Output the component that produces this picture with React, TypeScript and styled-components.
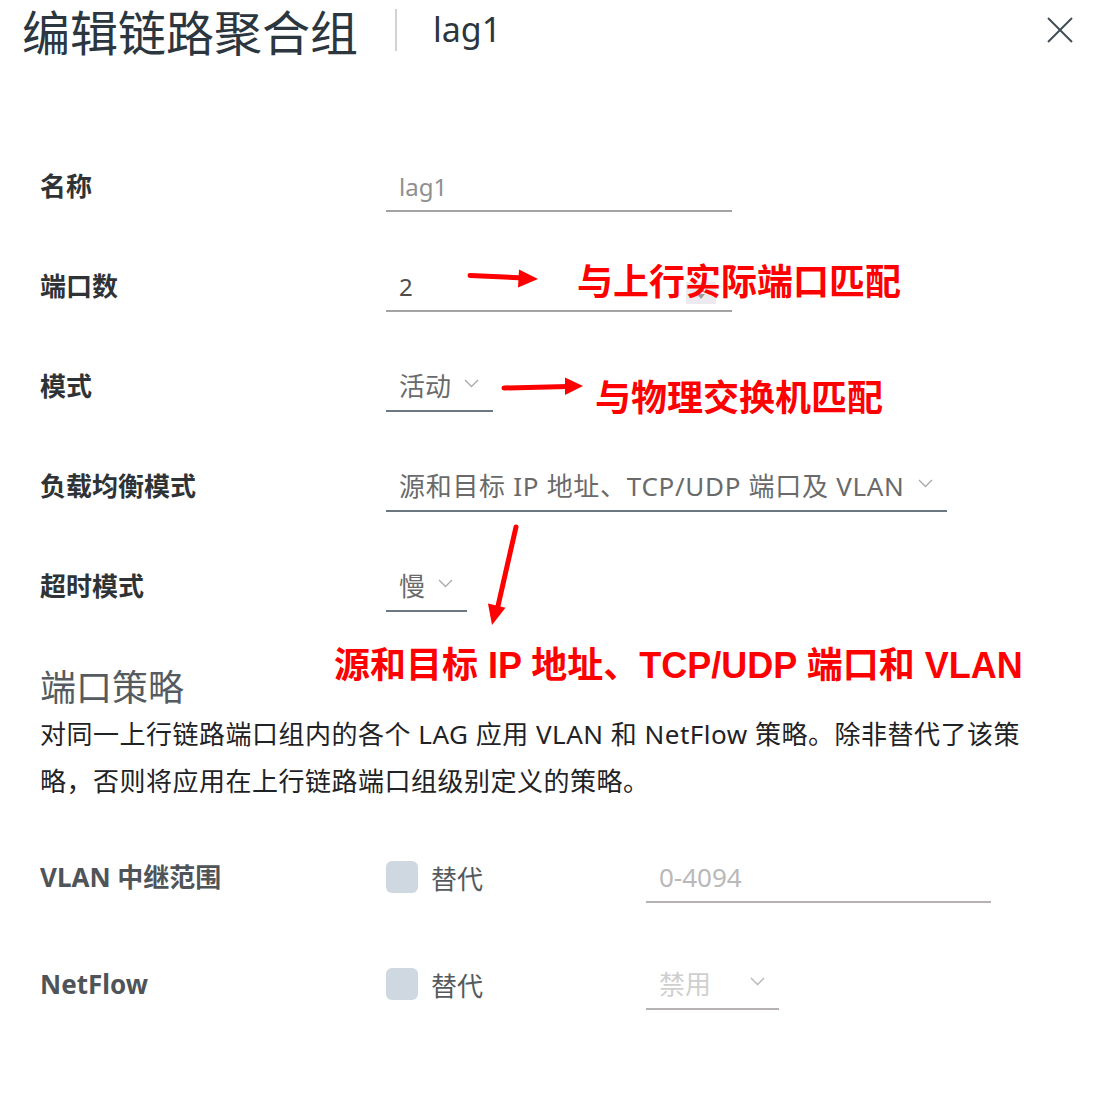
import React from "react";
import styled, { createGlobalStyle } from "styled-components";

const Global = createGlobalStyle`
  html, body { margin: 0; padding: 0; background: #ffffff; }
  body { font-family: "Noto Sans", "Noto Sans CJK SC", sans-serif; }
`;

const Page = styled.div`
  position: relative;
  width: 1108px;
  height: 1104px;
  overflow: hidden;
  background: #ffffff;
`;

const Header = styled.header`
  display: flex;
  align-items: center;
  height: 64px;
  margin-top: -2px;
  padding: 0 35px 0 22px;
`;

const Title = styled.h1`
  margin: 0;
  font-size: 48px;
  line-height: 64px;
  font-weight: 400;
  color: #2b363e;
  font-family: "Noto Sans CJK SC", sans-serif;
  white-space: nowrap;
`;

const Divider = styled.div`
  width: 2px;
  height: 42px;
  background: #d2d2d2;
  margin: 0 36px 0 37px;
`;

const SubTitle = styled.span`
  font-size: 34px;
  line-height: 60px;
  color: #2b363e;
  margin-top: -2px;
`;

const CloseButton = styled.button`
  margin-left: auto;
  border: 0;
  background: transparent;
  padding: 0;
  width: 26px;
  height: 26px;
  display: flex;
  align-items: center;
  justify-content: center;
  cursor: pointer;
`;

const Form = styled.div`
  display: flex;
  flex-direction: column;
  gap: 50px;
  margin-top: 100px;
  padding-left: 40px;
`;

const Row = styled.div`
  display: grid;
  grid-template-columns: 346px auto;
  align-items: start;
  height: 50px;
`;

const Label = styled.div<{ $soft?: boolean }>`
  font-size: 26px;
  line-height: 48px;
  font-weight: 700;
  color: ${(p) => (p.$soft ? "#4f5458" : "#2f3336")};
  font-family: "Noto Sans", "Noto Sans CJK SC", sans-serif;
  white-space: nowrap;
`;

type Tone = "muted" | "plain" | "placeholder" | "disabled";
const toneColor: Record<Tone, string> = {
  muted: "#8f8f8f",
  plain: "#4d4d4d",
  placeholder: "#b9b9b9",
  disabled: "#cfcfcf",
};

const Field = styled.div<{ $width?: number; $line: string; $tone: Tone }>`
  position: relative;
  display: inline-flex;
  align-items: center;
  justify-content: space-between;
  gap: 13px;
  box-sizing: content-box;
  height: 48px;
  width: ${(p) => (p.$width ? `${p.$width - 27}px` : "auto")};
  padding: 0 14px 0 13px;
  border-bottom: 2px solid ${(p) => p.$line};
  font-size: 24px;
  color: ${(p) => toneColor[p.$tone]};
  white-space: nowrap;
  justify-self: start;
`;

const SelectText = styled.span<{ $spread?: boolean }>`
  font-size: 26px;
  line-height: 48px;
  color: inherit;
  letter-spacing: ${(p) => (p.$spread ? "0.7px" : "0")};
`;

const Spinner = styled.div`
  width: 30px;
  height: 22px;
  margin-top: 14px;
  margin-right: 2px;
  background: #ece9ef;
  display: flex;
  align-items: center;
  justify-content: center;
`;

const Chevron = ({ color = "#a9a9a9" }: { color?: string }) => (
  <svg width="15" height="9" viewBox="0 0 15 9" style={{ marginTop: -6 }}>
    <polyline points="1,1 7.5,7.5 14,1" fill="none" stroke={color} strokeWidth="1.3" />
  </svg>
);

const Section = styled.section`
  padding-left: 40px;
  margin-top: 49px;
`;

const SectionTitle = styled.h2`
  margin: 0;
  font-size: 36px;
  line-height: 48px;
  font-weight: 400;
  color: #555b60;
  font-family: "Noto Sans CJK SC", sans-serif;
`;

const Paragraph = styled.p`
  margin: 2px 0 0 0;
  width: 1000px;
  font-size: 26px;
  line-height: 47px;
  letter-spacing: 0.5px;
  color: #1f2326;
`;

const PolicyList = styled.div`
  display: flex;
  flex-direction: column;
  gap: 57px;
  margin-top: 48px;
`;

const PolicyRow = styled.div`
  display: grid;
  grid-template-columns: 346px 260px auto;
  align-items: start;
  height: 50px;
`;

const CheckGroup = styled.label`
  display: flex;
  align-items: center;
  gap: 13px;
  height: 48px;
  font-size: 26px;
  color: #555a5e;
  font-family: "Noto Sans CJK SC", sans-serif;
`;

const CheckBox = styled.span`
  width: 32px;
  height: 32px;
  border-radius: 6px;
  background: #cfd8e0;
`;

const Annotation = styled.div<{ $x: number; $y: number }>`
  position: absolute;
  left: ${(p) => p.$x}px;
  top: ${(p) => p.$y}px;
  font-family: "Liberation Sans", "Noto Sans CJK SC", sans-serif;
  font-weight: 700;
  font-size: 36px;
  line-height: 44px;
  color: #ff0000;
  white-space: nowrap;
`;

const ArrowLayer = styled.svg`
  position: absolute;
  left: 0;
  top: 0;
  pointer-events: none;
`;

export default function App() {
  return (
    <Page>
      <Global />
      <Header>
        <Title>编辑链路聚合组</Title>
        <Divider />
        <SubTitle>lag1</SubTitle>
        <CloseButton aria-label="关闭">
          <svg width="26" height="26" viewBox="0 0 26 26">
            <line x1="1" y1="1" x2="25" y2="25" stroke="#3f4e56" strokeWidth="2" />
            <line x1="25" y1="1" x2="1" y2="25" stroke="#3f4e56" strokeWidth="2" />
          </svg>
        </CloseButton>
      </Header>

      <Form>
        <Row>
          <Label>名称</Label>
          <Field $width={346} $line="#a3a3a3" $tone="muted">
            <span>lag1</span>
          </Field>
        </Row>
        <Row>
          <Label>端口数</Label>
          <Field $width={346} $line="#a3a3a3" $tone="plain">
            <span>2</span>
            <Spinner>
              <svg width="10" height="14" viewBox="0 0 10 14">
                <polygon points="5,1 9,6 1,6" fill="#9b9b9b" />
                <polygon points="1,8 9,8 5,13" fill="#9b9b9b" />
              </svg>
            </Spinner>
          </Field>
        </Row>
        <Row>
          <Label>模式</Label>
          <Field $line="#6b7781" $tone="plain">
            <SelectText style={{ color: "#6a6a6a" }}>活动</SelectText>
            <Chevron />
          </Field>
        </Row>
        <Row>
          <Label>负载均衡模式</Label>
          <Field $line="#6b7781" $tone="plain">
            <SelectText $spread style={{ color: "#6a6a6a" }}>
              源和目标 IP 地址、TCP/UDP 端口及 VLAN
            </SelectText>
            <Chevron />
          </Field>
        </Row>
        <Row>
          <Label>超时模式</Label>
          <Field $line="#6b7781" $tone="plain">
            <SelectText style={{ color: "#6a6a6a" }}>慢</SelectText>
            <Chevron />
          </Field>
        </Row>
      </Form>

      <Section>
        <SectionTitle>端口策略</SectionTitle>
        <Paragraph>
          对同一上行链路端口组内的各个 LAG 应用 VLAN 和 NetFlow 策略。除非替代了该策略，否则将应用在上行链路端口组级别定义的策略。
        </Paragraph>
        <PolicyList>
          <PolicyRow>
            <Label $soft>VLAN 中继范围</Label>
            <CheckGroup>
              <CheckBox />
              替代
            </CheckGroup>
            <Field $width={345} $line="#b7b2b2" $tone="placeholder">
              <SelectText>0-4094</SelectText>
            </Field>
          </PolicyRow>
          <PolicyRow>
            <Label $soft>NetFlow</Label>
            <CheckGroup>
              <CheckBox />
              替代
            </CheckGroup>
            <Field $width={133} $line="#b7b2b2" $tone="disabled">
              <SelectText>禁用</SelectText>
              <Chevron color="#b5b5b5" />
            </Field>
          </PolicyRow>
        </PolicyList>
      </Section>

      <Annotation $x={577} $y={261}>与上行实际端口匹配</Annotation>
      <Annotation $x={595} $y={377}>与物理交换机匹配</Annotation>
      <Annotation $x={334} $y={644}>源和目标 IP 地址、TCP/UDP 端口和 VLAN</Annotation>

      <ArrowLayer width="1108" height="1104" viewBox="0 0 1108 1104">
        <line x1="470" y1="275.5" x2="524" y2="278" stroke="#ff0000" strokeWidth="5" strokeLinecap="round" />
        <polygon points="519,269.5 538,279 518,287.5" fill="#ff0000" />
        <line x1="504" y1="388" x2="568" y2="386.5" stroke="#ff0000" strokeWidth="5" strokeLinecap="round" />
        <polygon points="565,377.5 583,386 565,395" fill="#ff0000" />
        <line x1="516" y1="527" x2="498" y2="606" stroke="#ff0000" strokeWidth="5" strokeLinecap="round" />
        <polygon points="488,603.5 505.5,607.8 492,625" fill="#ff0000" />
      </ArrowLayer>
    </Page>
  );
}
